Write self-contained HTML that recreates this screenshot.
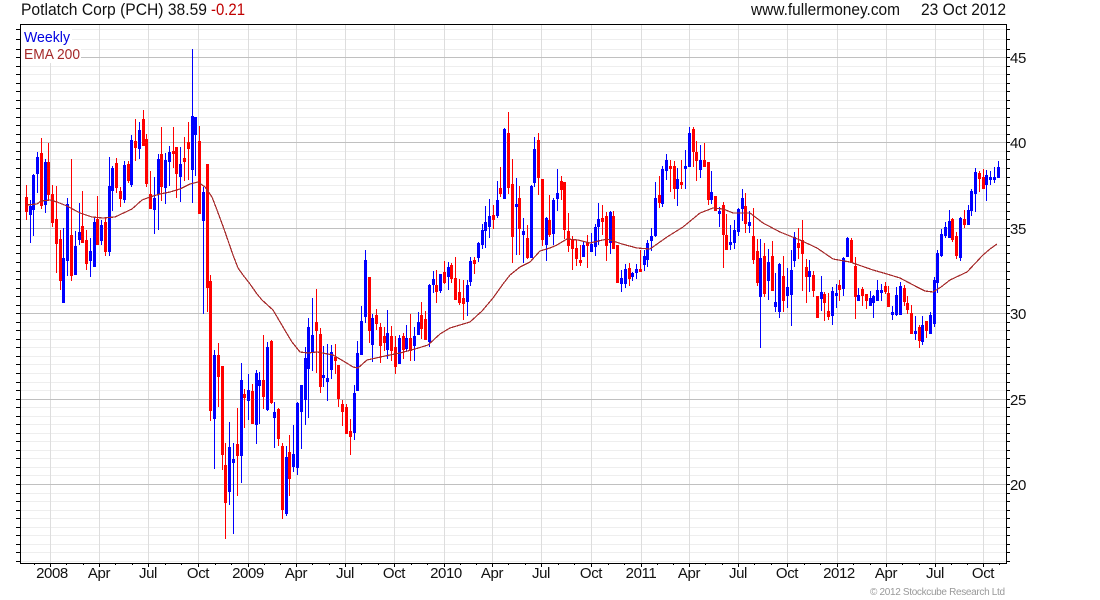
<!DOCTYPE html>
<html>
<head>
<meta charset="utf-8">
<title>Potlatch Corp (PCH)</title>
<style>
html,body{margin:0;padding:0;background:#fff;}
body{width:1100px;height:600px;overflow:hidden;}
svg{display:block;}
text{font-family:"Liberation Sans",Arial,sans-serif;}
</style>
</head>
<body>
<svg id="c" xmlns="http://www.w3.org/2000/svg" width="1100" height="600" viewBox="0 0 1100 600">
<rect width="1100" height="600" fill="#fff"/>
<g id="grid" shape-rendering="crispEdges"></g>
<g id="candles" shape-rendering="crispEdges"></g>
<polyline id="ema" fill="none" stroke="#a52a2a" stroke-width="1.2" shape-rendering="crispEdges" points="26,205 37,204 41,201 50,200 57,202 67,206 80,213 92,217 103,218 115,217 132,209 142,200 150,197 160,194 170,192 180,189 190,184 198,182 205,187 212,197 217,210 224,229 233,255 238,268 243,275 250,284 257,294 262,300 273,310 283,327 292,342 300,352 308,353 317,352 333,355 345,362 353,367 358,368 367,360 385,356 400,353 415,349 428,345 440,334 450,328 470,322 482,311 493,298 503,284 510,275 520,267 530,262 540,251 550,248 557,245 567,239 578,240 590,243 607,239 622,244 637,248 650,249 667,237 683,227 700,213 713,208 723,209 733,213 750,213 763,223 780,232 800,240 817,248 833,259 850,262 873,270 887,274 900,278 917,287 925,291 933,292 941,287 950,280 967,272 983,255 990,249 997,244"/>
<rect x="21" y="25" width="51" height="22" fill="#fff"/>
<rect x="21" y="47" width="60" height="16" fill="#fff"/>
<g id="frame" shape-rendering="crispEdges"></g>

<text x="21" y="15" font-size="17" fill="#111" textLength="186" lengthAdjust="spacingAndGlyphs">Potlatch Corp (PCH) 38.59</text>
<text x="211" y="15" font-size="17" fill="#c00000" textLength="34" lengthAdjust="spacingAndGlyphs">-0.21</text>
<text x="751" y="15" font-size="17" fill="#111" textLength="149" lengthAdjust="spacingAndGlyphs">www.fullermoney.com</text>
<text x="921" y="15" font-size="17" fill="#111" textLength="85" lengthAdjust="spacingAndGlyphs">23 Oct 2012</text>

<text x="24" y="42" font-size="15" fill="#0000e0" textLength="46" lengthAdjust="spacingAndGlyphs">Weekly</text>
<text x="24" y="59" font-size="15" fill="#a52a2a" textLength="56" lengthAdjust="spacingAndGlyphs">EMA 200</text>

<g font-size="15" fill="#111" letter-spacing="-0.4">
<text x="1010" y="63">45</text>
<text x="1010" y="148">40</text>
<text x="1010" y="234">35</text>
<text x="1010" y="319">30</text>
<text x="1010" y="405">25</text>
<text x="1010" y="490">20</text>
</g>
<g font-size="15" fill="#111" text-anchor="middle" letter-spacing="-0.4">
<text x="52" y="578">2008</text>
<text x="99" y="578">Apr</text>
<text x="148" y="578">Jul</text>
<text x="198" y="578">Oct</text>
<text x="248" y="578">2009</text>
<text x="296" y="578">Apr</text>
<text x="345" y="578">Jul</text>
<text x="394" y="578">Oct</text>
<text x="446" y="578">2010</text>
<text x="492" y="578">Apr</text>
<text x="541" y="578">Jul</text>
<text x="591" y="578">Oct</text>
<text x="641" y="578">2011</text>
<text x="689" y="578">Apr</text>
<text x="738" y="578">Jul</text>
<text x="787" y="578">Oct</text>
<text x="839" y="578">2012</text>
<text x="886" y="578">Apr</text>
<text x="935" y="578">Jul</text>
<text x="983" y="578">Oct</text>
</g>
<text x="870" y="595" font-size="10" fill="#999" textLength="135" lengthAdjust="spacing">© 2012 Stockcube Research Ltd</text>
</svg>
<script>
(function(){
var NS="http://www.w3.org/2000/svg";
function rect(p,x,y,w,h,f){var r=document.createElementNS(NS,"rect");r.setAttribute("x",x);r.setAttribute("y",y);r.setAttribute("width",w);r.setAttribute("height",h);r.setAttribute("fill",f);p.appendChild(r);}
var g=document.getElementById("grid"),fr=document.getElementById("frame");
var minor=[29,39,49],major=[57,142,228,313,399,484];
for(var m=0;m<major.length;m++){
  var base=57+m*85.4;
  for(var j=1;j<10;j++){minor.push(Math.round(base+j*8.54));}
}
for(var j2=1;j2<9;j2++){var yy=Math.round(484+j2*8.54);if(yy<563)minor.push(yy);}
minor.forEach(function(y){rect(g,21,y,985,1,"#eeeeee");});
var vx=[50,99,148,198,248,296,345,394,444,492,541,591,641,689,738,787,837,886,935,983];
vx.forEach(function(x){rect(g,x,25,1,538,"#dddddd");});
major.forEach(function(y){rect(g,21,y,985,1,"#c0c0c0");});
/* frame */
rect(fr,20,24,987,1,"#000");
rect(fr,20,24,1,540,"#000");
rect(fr,1006,24,1,540,"#000");
rect(fr,20,563,987,1,"#000");
minor.concat(major).forEach(function(y){rect(fr,16,y,4,1,"#000");rect(fr,1007,y,3,1,"#000");});
vx.forEach(function(x){rect(fr,x,564,1,3,"#000");});
var sm=[34];
for(var i=0;i<vx.length-1;i++){var d=(vx[i+1]-vx[i])/3;sm.push(Math.round(vx[i]+d),Math.round(vx[i]+2*d));}
sm.push(999);
sm.forEach(function(x){rect(fr,x,564,1,1,"#000");});

/* candles: colour(0 red,1 blue), wick top, body top, body bottom, wick bottom */
var D=[
[0,185,197,211,219],[1,200,206,214,242],[1,174,175,209,235],[1,152,157,173,192],[0,138,153,205,208],[1,159,162,204,212],[0,143,162,194,200],[0,185,194,222,226],[0,186,219,243,272],[0,230,239,280,289],
[1,228,258,302,302],[1,198,204,260,275],[0,159,235,275,280],[1,231,246,274,274],[1,203,232,239,244],[0,191,226,242,242],[0,230,240,263,269],[1,238,251,260,276],[1,218,222,266,266],[0,196,219,244,244],
[1,220,225,240,244],[0,217,222,251,255],[1,157,186,251,255],[1,166,168,190,210],[0,158,163,187,192],[0,187,191,198,206],[1,161,165,199,202],[0,161,164,180,182],[1,135,140,184,186],[0,119,141,147,160],
[1,122,130,148,158],[0,110,119,145,145],[0,134,139,183,186],[0,171,194,208,208],[1,177,198,209,233],[1,154,159,193,229],[0,127,154,186,200],[1,153,160,187,203],[1,146,152,161,185],[0,127,151,153,167],
[0,147,147,173,197],[1,147,164,176,201],[0,137,158,161,180],[0,122,142,148,179],[1,49,116,169,202],[1,117,117,134,175],[0,126,141,213,213],[1,187,192,220,313],[0,164,164,287,311],[0,275,281,410,420],
[1,350,355,418,468],[0,343,355,376,406],[0,366,366,454,469],[0,443,465,502,538],[1,422,447,491,504],[1,443,459,462,533],[0,408,444,455,495],[1,363,380,455,482],[0,389,394,397,427],[1,374,390,400,419],
[0,384,391,423,423],[1,370,373,424,443],[1,372,380,385,423],[0,335,380,396,408],[1,342,347,409,410],[0,340,341,402,403],[1,402,412,417,447],[0,408,409,438,445],[0,443,446,509,518],[1,446,457,513,515],
[0,435,452,478,495],[1,425,454,466,471],[1,402,403,467,474],[1,385,385,411,448],[1,347,358,399,424],[1,318,327,368,417],[1,298,335,352,370],[0,289,322,330,372],[0,328,334,386,392],[1,346,375,377,386],
[1,344,378,381,400],[1,345,352,369,378],[0,344,357,360,373],[0,365,365,398,406],[0,400,404,411,425],[0,404,407,433,433],[0,419,431,436,454],[1,385,393,432,439],[1,341,353,390,390],[1,306,321,354,354],
[1,250,260,316,322],[0,277,277,330,342],[1,314,318,344,361],[0,309,315,323,329],[0,323,327,345,362],[0,327,336,342,350],[1,310,333,349,358],[0,326,336,350,360],[0,336,347,366,373],[1,335,338,363,363],
[0,333,336,349,358],[1,325,338,348,350],[0,314,338,350,360],[1,327,336,345,360],[1,312,322,334,334],[0,302,315,328,338],[0,311,319,339,339],[1,284,285,341,346],[1,271,279,284,292],[0,270,285,291,302],
[1,274,274,290,292],[0,261,272,282,283],[1,262,267,276,289],[0,263,265,278,282],[0,257,278,299,299],[0,279,292,302,304],[0,280,298,303,319],[1,280,285,301,315],[1,257,261,281,285],[0,257,260,263,273],
[1,242,243,257,261],[1,224,230,244,248],[1,206,222,230,247],[1,199,216,226,237],[0,205,215,219,228],[1,181,200,215,217],[0,167,188,193,196],[1,128,129,198,198],[0,112,133,187,193],[0,159,184,236,262],
[1,178,204,206,254],[0,186,198,228,254],[1,218,231,234,262],[0,225,238,257,258],[1,185,186,257,257],[1,137,149,182,186],[0,133,140,177,194],[0,179,179,239,245],[1,217,218,244,260],[0,195,220,234,236],
[1,198,200,233,244],[1,169,193,198,210],[0,176,181,189,199],[0,182,182,229,238],[0,213,231,245,251],[0,236,240,248,269],[0,240,248,258,265],[0,245,260,262,265],[1,241,245,256,256],[0,235,242,245,267],
[1,233,244,251,251],[1,224,227,246,255],[1,203,219,226,244],[0,205,218,221,234],[0,212,216,245,260],[1,211,212,242,253],[0,211,216,248,248],[0,245,245,282,282],[1,270,278,283,291],[1,264,269,283,287],
[0,263,268,278,285],[1,272,273,276,280],[1,264,269,272,278],[0,250,269,271,271],[1,250,256,264,270],[1,240,243,259,266],[1,228,236,240,250],[1,182,198,235,236],[0,176,195,202,207],[1,166,169,203,206],
[1,154,160,170,179],[0,160,166,168,191],[0,161,166,188,198],[1,168,179,188,205],[0,160,182,184,188],[1,150,166,168,188],[1,127,133,166,166],[0,127,129,151,166],[0,141,152,160,180],[1,145,160,169,177],
[0,143,160,166,166],[0,162,162,199,204],[1,171,192,199,203],[0,196,196,210,210],[1,207,211,213,226],[0,202,205,234,267],[0,214,235,249,249],[1,225,242,244,249],[1,220,230,242,248],[1,208,209,231,235],
[1,189,198,208,220],[0,193,206,223,232],[1,211,222,225,232],[0,208,236,259,263],[0,239,251,282,285],[1,239,258,296,347],[0,243,256,293,296],[1,249,262,280,299],[0,241,256,290,290],[1,273,302,306,311],
[1,263,264,311,317],[0,256,276,300,311],[1,268,287,295,307],[1,250,270,294,325],[1,232,237,260,266],[0,228,243,247,258],[0,220,240,253,290],[0,259,267,276,302],[1,260,271,276,291],[0,271,275,290,296],
[0,296,296,317,317],[1,276,292,298,310],[0,292,294,302,320],[0,293,311,316,319],[1,287,291,315,324],[1,284,293,295,307],[0,280,285,289,300],[1,257,258,288,295],[1,237,238,256,256],[0,238,240,262,262],
[0,257,266,296,318],[1,288,295,300,300],[0,287,289,295,305],[0,294,294,300,308],[1,291,298,305,305],[1,295,296,302,317],[1,280,290,300,300],[1,284,290,292,300],[0,282,286,291,293],[0,286,293,306,306],
[1,306,312,314,319],[1,287,295,314,315],[1,282,286,314,314],[0,285,288,301,305],[0,296,303,309,313],[0,305,313,333,333],[1,316,331,333,339],[0,325,327,340,347],[1,316,325,341,344],[0,321,321,330,337],
[1,312,315,333,333],[1,277,280,323,326],[1,250,253,282,292],[1,229,234,255,256],[1,222,227,235,237],[1,210,221,237,237],[0,218,219,239,241],[0,232,236,255,258],[1,217,218,257,260],[0,210,219,224,227],
[1,205,210,224,224],[1,189,191,210,215],[1,168,172,193,211],[0,171,173,178,191],[0,169,177,188,188],[1,170,175,184,200],[1,171,177,179,184],[1,167,177,179,182],[1,161,167,177,177]
];
var cg=document.getElementById("candles");
var red="",blue="";
D.forEach(function(c,i){
  var x=Math.floor(26.3+3.767*i);
  var s="M"+x+" "+c[1]+"h1V"+(c[4]+1)+"h-1zM"+(x-1)+" "+c[2]+"h3V"+(c[3]+1)+"h-3z";
  if(c[0])blue+=s;else red+=s;
});
[[red,"#ff0000"],[blue,"#0000ff"]].forEach(function(a){
  var p=document.createElementNS(NS,"path");p.setAttribute("d",a[0]);p.setAttribute("fill",a[1]);cg.appendChild(p);
});
})();
</script>
</body>
</html>
